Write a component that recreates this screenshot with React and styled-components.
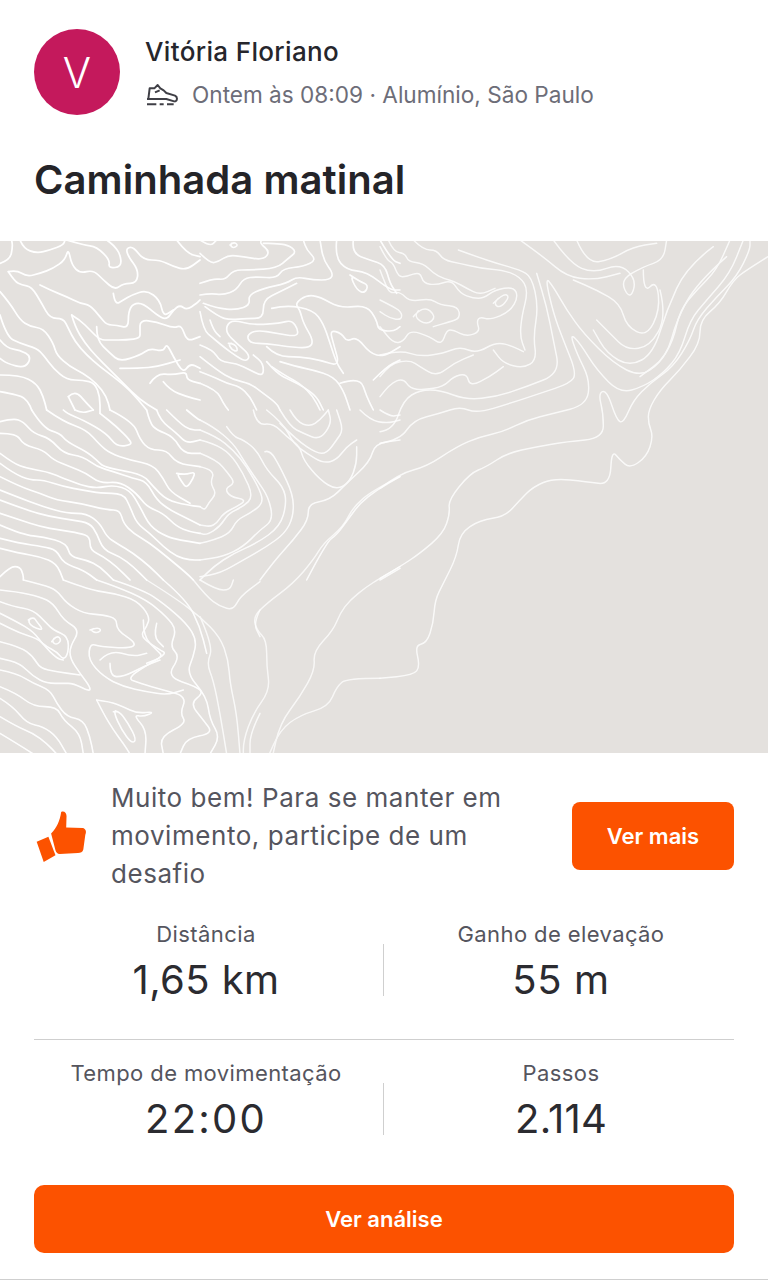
import React from "react";
import styled, { createGlobalStyle } from "styled-components";

const Global = createGlobalStyle`
  html, body { margin: 0; padding: 0; background: #fff; }
  * { box-sizing: border-box; }
  body { font-family: Inter, "Liberation Sans", sans-serif; }
`;

const Page = styled.div`
  width: 768px;
  height: 1280px;
  overflow: hidden;
  background: #fff;
  display: flex;
  flex-direction: column;
  border-bottom: 1px solid #cfcfcf;
`;
const Header = styled.header`
  display: flex;
  gap: 25px;
  padding: 29px 34px 0;
  height: 115px;
`;
const Avatar = styled.div`
  width: 86px;
  height: 86px;
  border-radius: 50%;
  background: #c4195c;
  color: #fff;
  font-size: 42px;
  font-weight: 300;
  display: flex;
  align-items: center;
  justify-content: center;
`;
const Who = styled.div`
  display: flex;
  flex-direction: column;
  gap: 12px;
  padding-top: 7px;
`;
const Name = styled.div`
  font-size: 26px;
  line-height: 32px;
  font-weight: 500;
  letter-spacing: 0.35px;
  color: #26262c;
`;
const Meta = styled.div`
  display: flex;
  align-items: center;
  gap: 13px;
  font-size: 22.6px;
  line-height: 30px;
  color: #6d6d78;
`;
const Title = styled.h1`
  margin: 0;
  padding: 40px 34px 0;
  height: 126px;
  font-size: 40px;
  line-height: 50px;
  font-weight: 600;
  letter-spacing: 0.06px;
  color: #242428;
`;
const MapBox = styled.svg`
  display: block;
  width: 768px;
  height: 512px;
  flex: none;
  background: #e4e1de;
`;
const Promo = styled.section`
  display: flex;
  align-items: center;
  justify-content: space-between;
  padding: 28px 34px 0 36px;
  height: 138px;
`;
const PromoBody = styled.div`
  display: flex;
  align-items: center;
  gap: 24px;
`;
const PromoText = styled.p`
  margin: 0;
  width: 420px;
  font-size: 26px;
  line-height: 38px;
  letter-spacing: 0.55px;
  color: #55555e;
`;
const Button = styled.button`
  border: 0;
  background: #fc5200;
  color: #fff;
  font-family: inherit;
  font-size: 22px;
  font-weight: 600;
  height: 68px;
  border-radius: ${(p) => p.$radius}px;
  width: ${(p) => p.$width};
  padding: 0;
`;
const Stats = styled.div`
  margin: 0 34px;
  display: flex;
  flex-direction: column;
`;
const StatRow = styled.div`
  display: grid;
  grid-template-columns: 350px 350px;
  height: ${(p) => p.$height}px;
  padding-top: ${(p) => p.$top}px;
  border-bottom: ${(p) => (p.$rule ? "1px solid #cfcfcf" : "0")};
`;
const Stat = styled.div`
  position: relative;
  display: flex;
  flex-direction: column;
  align-items: center;
  padding: ${(p) => (p.$first ? "0 6px 0 0" : "0 0 0 4px")};
  &::after {
    content: ${(p) => (p.$first ? '""' : "none")};
    position: absolute;
    right: 0;
    top: 25px;
    height: 52px;
    width: 1px;
    background: #cfcfcf;
  }
`;
const Label = styled.div`
  font-size: 22px;
  line-height: 30px;
  letter-spacing: 0.4px;
  color: #55555e;
`;
const Value = styled.div`
  font-size: 40px;
  line-height: 48px;
  margin-top: 7px;
  letter-spacing: ${(p) => p.$track}px;
  color: #2b2b30;
`;
const Footer = styled.div`
  padding: 0 34px;
  margin-top: 30px;
`;

const smooth = (pts, closed) => {
  const p = closed ? [...pts, pts[0], pts[1]] : pts;
  let d = `M${p[0][0]} ${p[0][1]}`;
  for (let i = 1; i < p.length - 1; i++) {
    const mx = (p[i][0] + p[i + 1][0]) / 2;
    const my = (p[i][1] + p[i + 1][1]) / 2;
    d += `Q${p[i][0]} ${p[i][1]} ${mx} ${my}`;
  }
  if (!closed) d += `L${p[p.length - 1][0]} ${p[p.length - 1][1]}`;
  return d;
};
const parse = (s) => s.trim().split(/\s+/).map((q) => q.split(",").map(Number));

const tiles = [
  { x: 0, y: 0, o: 1, w: 5.2, open: [
    "0,70 30,60 38,20 35,0",
    "60,0 70,25 110,40 150,30 190,15 195,0",
    "25,95 50,90 80,110 120,100 160,85 195,60 205,25 215,75 240,100 280,90 310,120 345,150 370,130 410,130 415,90 385,50 378,25 400,20 430,60 480,60 520,80 560,90 600,60",
    "25,95 45,125 65,135 95,140 125,190 150,235 190,235 205,265 225,305 260,345 300,380 340,410 390,450 440,510",
    "120,135 150,150 200,170 240,190 270,195 300,230 320,255 350,255 385,265 385,215 400,190 430,190 470,225 500,240 520,210 540,195 560,210 590,190 600,180",
    "215,225 240,240 270,270 300,300 330,300 380,300 420,295 420,275 420,240 470,245 520,265 545,255 560,305 600,290",
    "215,225 225,260 255,310 290,350 330,390 370,430 420,480 470,510",
    "290,260 290,300 330,340 360,365 420,345 450,325 490,335 500,310 520,350 550,400 570,370 600,385",
    "200,0 250,15 290,20 330,60 325,85 365,80 360,40 340,15 320,0",
    "0,155 30,190 60,240 90,260 130,265 160,310 170,345 210,380 250,400 290,430 320,470 330,510",
    "0,225 20,290 60,310 110,325 130,345 160,385 200,420 250,420 285,430 300,470 300,520",
    "0,300 20,325 60,330 95,350 75,385 20,370 0,355",
    "0,405 60,405 110,430 130,470 140,510",
    "0,455 60,465 85,485 95,510",
    "205,470 225,450 260,490 280,510",
    "205,470 225,510",
    "450,430 470,400 520,405 560,395 560,420 600,430",
    "490,425 510,450 560,470 600,480",
    "530,0 560,40 600,50",
    "340,160 345,195 370,180 395,165 440,150 480,180 490,230 520,210",
    "360,385 420,385 470,380 540,360",
  ], closed: [] },
  { x: 600, y: 0, o: 0.95, w: 5, open: [
    "0,40 30,70 55,65 85,45 130,50 190,60 210,35 180,10 185,0",
    "0,130 40,115 75,120 100,90 150,90 230,85 265,55 290,35 265,15 220,10 190,10",
    "0,165 30,160 70,165 110,150 130,115 170,110 230,115 250,85 310,80 350,60 320,30 310,0",
    "10,190 50,205 110,210 150,195 145,165 190,145 260,130 290,110 340,120 390,120 400,100 370,60 360,0",
    "15,200 55,230 90,240 140,235 190,235 190,180 240,155 290,130",
    "0,215 10,270 40,295 70,320 110,350 140,365 150,345 110,310 80,280 80,255 100,240 160,255 240,250 275,240 295,270 290,290 230,280 170,270 140,285 150,310 200,310 260,320 330,325 340,300 310,250 300,210 285,190 320,165 360,170 420,205 500,195 530,240 535,270 580,275 600,260",
    "215,205 260,195 340,210 370,250 390,310 410,370 430,400",
    "200,320 230,350 300,350 360,360 420,380 400,310 390,270 425,280 440,305 470,290 510,340 550,350 600,320",
    "30,240 40,270 60,290",
    "0,315 40,330 60,365 110,370 150,390 190,410 190,370 160,345",
    "0,350 50,390 100,420 150,430 190,460 230,490 240,510",
    "0,395 40,410 80,430 120,440 150,470 170,510",
    "0,430 50,450 70,490 85,510",
    "200,365 230,400 270,420 310,440 350,470 370,510",
    "240,365 290,380 340,390 400,410 430,450 450,510",
    "215,380 260,410 300,430 340,470 360,510",
    "410,0 405,50 440,90 500,95 570,150 600,150",
    "460,0 455,40 510,60 555,75 570,130 590,160",
    "420,430 480,410 500,470 520,510",
    "520,420 560,380 600,360",
    "540,0 575,60 600,70",
    "0,0 30,20 50,0",
  ], closed: [
    "85,310 105,310 115,335 95,330",
    "450,105 480,125 505,135 495,160 470,150",
    "90,15 100,5 115,15 100,25",
  ] },
  { x: 0, y: 510, o: 1, w: 5, open: [
    "95,0 130,55 180,70 200,95 260,125 290,150 310,170 360,180 430,195 460,230 500,270 560,285 600,290",
    "140,0 190,35 260,60 300,105 330,130 390,150 460,165 490,205 510,245 570,280",
    "190,0 200,10 250,30 320,70 350,110 395,105 390,90 350,50 300,10",
    "225,0 245,10 280,0",
    "330,0 400,35 420,90 450,120 500,120 530,160 600,170",
    "0,35 40,25 70,35 100,70 150,85 190,130 250,140 290,170 340,185 400,205 440,215 470,270 510,300 550,320 600,345",
    "0,70 50,70 70,105 130,120 160,150 210,170 260,190 300,220 360,215 410,250 440,290 490,310 530,350 570,365 600,370",
    "0,130 40,160 80,175 140,185 180,200 240,225 290,235 340,225 390,240 420,290 450,350 500,380 540,390 600,400",
    "0,160 40,190 90,210 130,210 190,230 250,240 300,250 370,250 390,290 410,340 450,370 490,410 530,440 570,450 600,450",
    "0,200 60,230 120,250 170,270 240,280 320,300 360,300 370,340 400,370 450,400 500,440 560,490 580,510",
    "0,240 50,260 130,290 200,310 260,310 300,340 320,380 350,400 400,430 450,470 490,510",
    "0,270 80,300 150,320 220,330 270,340 290,370 310,420 360,440 400,470 440,510",
    "0,310 60,330 120,350 180,360 240,370 270,380 270,420 310,440 350,470 390,510",
    "0,345 70,375 130,380 200,400 210,440 260,450 300,470 340,510",
    "0,385 60,400 130,410 170,420 190,460 250,480 290,510",
    "0,415 60,430 120,440 170,460 190,510",
    "0,500 30,470 60,470 70,495 70,510",
    "440,0 450,40 470,60 520,80 550,130 600,130",
    "470,0 480,30 530,70 560,100 600,90",
    "500,0 540,40 570,60 600,60",
    "560,0 590,25 600,30",
  ], closed: ["530,190 555,195 585,185 580,205 560,235 545,215"] },
  { x: 600, y: 510, o: 0.85, w: 4.6, open: [
    "0,60 50,80 100,120 140,170 180,240 190,280 150,310 110,330 90,370 40,390 0,400",
    "0,90 40,100 90,130 130,190 160,260 130,290 85,310 60,350 20,375 0,370",
    "0,130 50,150 85,190 105,220 75,235 90,260 140,270 110,290 70,310 50,340 30,350 0,345",
    "0,170 45,180 30,220 50,250 25,280 15,300 0,290",
    "0,30 40,50 100,100 130,150 170,210 205,260 220,330 180,360 130,410 70,440 0,450",
    "80,50 100,80 130,90 170,120 200,180 250,230 260,280 240,350 170,400 100,430 40,470 0,510",
    "195,125 210,120 240,170 280,255 280,320 255,370 200,410 130,450 60,490 0,500",
    "160,0 170,45 220,40 260,80 300,110 310,150 360,210 410,240 450,215 470,160 470,110",
    "200,0 250,40 280,100 320,130 370,160 410,150 440,110 470,90",
    "270,0 290,35 330,50 360,30 385,0",
    "240,0 270,50 310,70 360,90 395,40 385,0",
    "240,40 290,90 350,130 380,130 410,90 430,60 410,0",
    "180,510 225,450 280,390 325,330 325,280 390,270 440,220 510,155 525,100 600,90",
    "320,510 380,395 410,375 450,320 480,280 530,240 600,200",
    "540,510 600,475",
    "480,0 510,30 560,40 600,30",
    "540,0 570,20 600,15",
  ], closed: [] },
  { x: 0, y: 1020, o: 0.95, w: 4.8, open: [
    "70,0 130,15 170,30 200,70 250,100 310,105 350,115 350,150 410,190 390,205 300,200 270,190 265,240 310,290 370,320 440,335 500,345 550,330",
    "0,30 50,35 120,50 160,70 190,120 240,150 210,200 210,235 240,280 270,320 270,335 220,310 190,310 140,310 100,290 60,250 0,235",
    "0,65 40,80 100,90 140,130 160,150 205,170 205,220 190,240 170,215 140,200 110,175 60,160 0,130",
    "0,100 50,125 100,155 130,195 170,235 190,240",
    "0,185 60,200 100,230 120,265 170,275 240,285",
    "0,270 50,280 100,310 150,330 170,370 200,410 250,420 270,470 280,522",
    "0,320 50,340 100,380 170,380 190,420 240,460 250,522",
    "0,355 40,380 80,430 130,440 170,470 200,522",
    "0,410 50,440 100,460 140,490 170,522",
    "0,460 50,490 100,522",
    "290,360 330,365 370,380 410,400 465,395 430,410 400,405 440,450 435,522",
    "290,360 310,400 340,450 370,490 390,522",
    "190,0 270,30 340,40 410,60 450,110 440,140 420,170 480,210 500,220 450,250 380,295 420,310 490,330 560,350 540,400 560,430 480,470 490,522",
    "290,0 350,20 440,60 500,110 530,150 510,200 540,230 500,290 590,320 610,340 570,370 610,420 640,460 560,475 540,522",
    "340,0 430,30 490,70 560,130 590,180 580,230 560,280 620,350 630,420 660,470 630,522",
    "430,120 430,170 470,210 490,230 440,250",
    "470,130 460,170 490,200",
    "330,250 330,290 370,290 430,260 480,240",
    "300,240 330,210 400,230 440,220",
    "490,0 560,60 600,140 620,220",
  ], closed: [
    "85,120 100,110 110,125 130,150 110,145 90,135",
    "155,185 170,165 185,180 170,195",
    "270,150 290,142 305,150 290,160",
    "340,395 355,390 385,430 410,480 395,490 365,450",
  ] },
  { x: 0, y: 1020, o: 0.8, w: 4.4, open: [
    "440,0 520,50 600,110 660,170 685,240 690,310 710,400 720,522",
    "600,110 640,200 620,250 640,300 660,400 680,522",
    "580,0 620,50 660,80 700,90 720,50 780,5",
    "600,0 650,30 690,30 700,0",
    "780,90 760,130 780,170",
    "780,400 750,460 750,522",
  ], closed: [] },
  { x: 1140, y: 0, o: 0.8, w: 4.4, open: [
    "0,20 20,60 40,70 55,110 80,110 120,95 130,130 170,135 215,120 240,160 280,175 310,175 345,150 400,140 415,170 390,215 330,240 300,230 290,245 300,275 260,290 220,270 200,270 185,315 150,290 90,270 70,305 40,310 0,260",
    "0,90 15,130 30,160 60,155 90,185 150,175 180,195 235,200 240,235 210,245 160,260",
    "0,180 30,195 65,215 65,240 30,235 0,215",
    "25,0 40,35 75,40 85,65 130,70 160,100 190,115 225,125 260,145 300,165 345,145",
    "100,0 130,30 170,30 190,60 240,70 300,85 370,90 420,110 445,150 425,230 420,290 435,330",
    "235,30 290,50 350,70 420,90 455,110 475,200 460,290 470,360 430,385 370,370 340,330",
    "0,345 60,330 120,350 190,340 240,320 290,340 350,305 400,320 430,335",
    "0,410 30,370 90,360 120,380 170,410 220,370 280,345",
    "0,470 30,430 70,415 90,445 130,450 190,440 220,410 260,400 270,440 330,410 370,380",
    "0,610 60,600 100,540 180,520 240,500 290,520 390,490 480,460 570,430 590,400 550,300 520,220 495,110 520,140 560,210 610,280 700,370 780,410 840,370 880,300 900,210 950,150 1010,90 1050,0",
    "0,575 40,570 70,480 120,450 180,450 260,480 350,470 440,440 540,400 520,300 500,200 470,100",
    "0,745 60,700 140,680 230,620 300,590 370,575 440,540 520,520 620,495 630,420 590,340 570,280 600,310 650,390 720,460 790,440 850,400 900,340 930,240 980,180 1050,100 1090,0",
    "0,1015 60,980 120,940 190,880 210,820 205,780 270,700 320,680 380,640 470,620 560,605 670,595 670,520 655,460 680,450 710,540 730,550 760,480 810,430 880,380 930,300 950,240 1010,170 1070,110 1110,30 1110,0",
    "1164,50 1100,90 1060,120 1020,190 960,240 960,310 900,390 840,450 805,510 805,550 820,590 800,650 750,685 720,660 695,630 690,735 620,725 520,715 460,740 420,780 375,830 300,840 240,880 230,950 190,1030 165,1080 160,1150 140,1210 105,1215 120,1280 100,1305 0,1315",
    "420,0 490,50 560,110 640,120 720,100",
    "520,0 570,70 640,100 720,70 770,120 750,180 720,120 790,80 850,60 860,0",
    "590,0 620,70 690,60 760,20 830,10",
    "790,90 790,160 830,120 840,210 800,290 740,260 720,190 650,150 580,120",
    "840,150 860,230 810,320 740,330 690,280 650,240",
    "1000,20 920,80 860,210 820,340 750,380 680,340 640,270",
    "1040,50 950,130 890,240 860,350 780,410",
  ], closed: [
    "100,230 130,195 170,230 140,255",
    "340,190 370,160 390,170 360,205",
  ] },
  { x: 0, y: 0, o: 0.75, w: 4.4, open: [
    "1200,980 1140,1015 1100,1040 1050,1080 1020,1120 1000,1170 940,1235 945,1290 900,1370 840,1450 815,1560",
    "1140,1315 1040,1315 1010,1340 985,1400 900,1425 840,1470 800,1560",
    "1200,710 1120,750 1060,800 1030,860 970,910 940,960 880,1030 800,1090 760,1130 770,1170 800,1200 800,1280 810,1350 760,1420 730,1500 730,1560",
  ], closed: [] },
];

const Topo = () => (
  <MapBox viewBox="0 3 2304 1536" preserveAspectRatio="none" aria-hidden="true">
    <g fill="none" stroke="#fff" strokeLinejoin="round" strokeLinecap="round">
      {tiles.map((t, i) => (
        <g key={i} transform={`translate(${t.x} ${t.y})`} opacity={t.o} strokeWidth={t.w}>
          {t.open.map((s, j) => <path key={j} d={smooth(parse(s))} />)}
          {t.closed.map((s, j) => <path key={j} d={smooth(parse(s), true)} />)}
        </g>
      ))}
    </g>
  </MapBox>
);

const ShoeIcon = () => (
  <svg width="34" height="24" viewBox="16 28 102 72" fill="none" stroke="#3f3f46" strokeWidth="6" strokeLinejoin="round" aria-hidden="true">
    <path d="M26 76 L30 44 L44 44 L54 34 L62 44 L72 50 L80 58 L106 66 C114 70 114 80 106 84" />
    <path d="M22 76 H80 L106 84" />
    <path d="M46 56 L60 50" />
    <path d="M22 92 H50 M60 92 H72 M82 92 H102" />
  </svg>
);
const ThumbIcon = () => (
  <svg width="51" height="53" viewBox="45 60 152 158" fill="#fc5200" aria-hidden="true">
    <path d="M47 155 L82 140 L103 195 L68 215 Z" />
    <path d="M90 130 C108 112 116 92 120 66 C128 62 136 68 136 78 L135 112 L184 114 C194 116 196 126 192 134 L186 178 C184 186 178 188 170 188 L116 191 C108 191 105 186 103 180 L90 130 Z" />
  </svg>
);

const stats = [
  [["Distância", "1,65 km", 0.4], ["Ganho de elevação", "55 m", 0.7]],
  [["Tempo de movimentação", "22:00", 2.2], ["Passos", "2.114", 0.2]],
];

export default function App() {
  return (
    <Page>
      <Global />
      <Header>
        <Avatar>V</Avatar>
        <Who>
          <Name>Vitória Floriano</Name>
          <Meta><ShoeIcon />Ontem às 08:09 · Alumínio, São Paulo</Meta>
        </Who>
      </Header>
      <Title>Caminhada matinal</Title>
      <Topo />
      <Promo>
        <PromoBody>
          <ThumbIcon />
          <PromoText>Muito bem! Para se manter em movimento, participe de um desafio</PromoText>
        </PromoBody>
        <Button $radius={8} $width="162px">Ver mais</Button>
      </Promo>
      <Stats>
        {stats.map((row, r) => (
          <StatRow key={r} $rule={r === 0} $height={r === 0 ? 149 : 115} $top={r === 0 ? 28 : 18}>
            {row.map(([label, value, track], c) => (
              <Stat key={label} $first={c === 0}>
                <Label>{label}</Label>
                <Value $track={track}>{value}</Value>
              </Stat>
            ))}
          </StatRow>
        ))}
      </Stats>
      <Footer><Button $radius={10} $width="100%">Ver análise</Button></Footer>
    </Page>
  );
}
